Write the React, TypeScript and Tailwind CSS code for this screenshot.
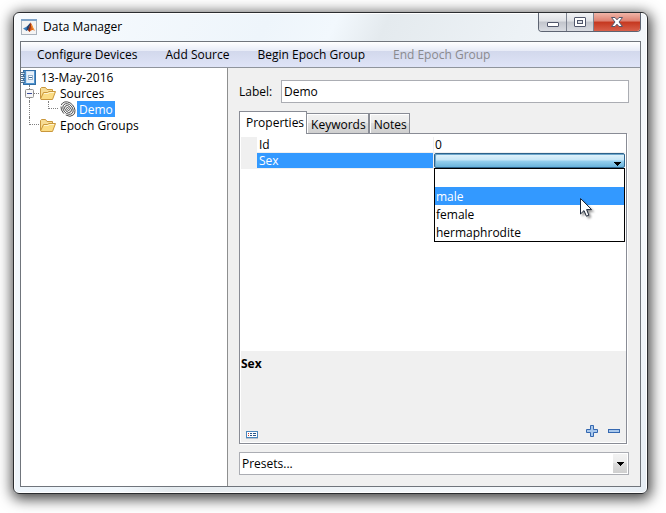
import { useState } from "react";

function MatlabIcon() {
  return (
    <svg width="16" height="16" viewBox="0 0 16 16" aria-hidden="true" className="shrink-0">
      <rect x="0.5" y="0.5" width="15" height="15" fill="#f4f4f4" stroke="#a9b2bc" />
      <rect x="0" y="0" width="16" height="2" fill="#7fa3c8" />
      <path d="M2 9.5 L6 7.5 L8 9 L5.5 12 Z" fill="#3a7fc0" />
      <path d="M6 7.5 L9.5 3.5 L8.5 9.5 L5.5 12 Z" fill="#27406e" />
      <path d="M9.5 3.5 C10.5 4 12 9 14 12 C12 10.5 11 10.5 8.5 13 L7 11 C8.5 9 9 6 9.5 3.5 Z" fill="#e0641c" />
      <path d="M9.5 3.5 C10.3 5 10 9 8.5 13 L7 11 C8.5 9 9 6 9.5 3.5 Z" fill="#8c2b16" />
      <path d="M10.5 6 C11.3 8 12 9.5 13 11" stroke="#f6a23a" fill="none" />
    </svg>
  );
}

function BookIcon() {
  return (
    <svg width="15" height="15" viewBox="0 0 15 15" aria-hidden="true" className="shrink-0">
      <rect x="2.5" y="0.5" width="12" height="14" fill="#4f93cf" stroke="#346fa6" />
      <rect x="5" y="1" width="8" height="12" fill="#cfe2f3" />
      <rect x="6" y="2" width="7" height="11" fill="#e8f1fa" />
      <rect x="7.5" y="5.5" width="4" height="4" fill="#fff" stroke="#9db4ca" />
      <path d="M8 7.5h3" stroke="#3d6d9c" />
      <path d="M0 2.5h4M0 4.5h4M0 6.5h4M0 8.5h4M0 10.5h4M0 12.5h4" stroke="#4c6f92" />
      <path d="M1 3.5h2M1 7.5h2M1 11.5h2" stroke="#d5e2ee" />
    </svg>
  );
}

function FolderIcon() {
  return (
    <svg width="16" height="13" viewBox="0 0 16 13" aria-hidden="true" className="shrink-0">
      <path d="M0.5 11.5 V1.5 L1.5 0.5 H5.5 L7 2.5 H12.5 V5" fill="#f7dc94" stroke="#c9973c" />
      <path d="M0.5 12 L3.5 5.5 H7.5 L9 4.5 H15.5 L12.5 12.5 H1 Z" fill="#fbdc84" stroke="#c9973c" />
      <path d="M4 6.5 H8 L9.5 5.5 H14" stroke="#fff5cf" fill="none" />
    </svg>
  );
}

function FingerprintIcon() {
  return (
    <svg width="16" height="16" viewBox="0 0 16 16" fill="none" stroke="#444" strokeWidth="0.9" aria-hidden="true" className="shrink-0">
      <g transform="rotate(-42 8 8)">
        <ellipse cx="8" cy="8" rx="1" ry="1.8" />
        <ellipse cx="8" cy="8" rx="2.7" ry="4" />
        <ellipse cx="8" cy="8" rx="4.4" ry="6" />
        <ellipse cx="8" cy="8" rx="6.1" ry="8" strokeDasharray="19 2 8 1.5" />
      </g>
    </svg>
  );
}

function Expander() {
  return (
    <svg width="9" height="9" viewBox="0 0 9 9" aria-hidden="true">
      <rect x="0.5" y="0.5" width="8" height="8" rx="1" fill="#f6f6f6" stroke="#919191" />
      <path d="M2 4.5h5" stroke="#3a4a9a" />
    </svg>
  );
}

function DownArrow() {
  return (
    <svg width="7" height="4" viewBox="0 0 7 4" aria-hidden="true" shapeRendering="crispEdges">
      <path d="M0 0h7v1H0zM1 1h5v1H1zM2 2h3v1H2zM3 3h1v1H3z" fill="#000" />
    </svg>
  );
}

function Cursor() {
  return (
    <svg width="16" height="22" viewBox="0 0 16 22" aria-hidden="true" className="drop-shadow-[2px_2px_1px_rgba(0,0,0,0.4)]">
      <path
        d="M0.5 0.5 V16 L4 12.6 L6.4 18.2 L8.9 17.2 L6.6 11.6 H11.6 Z"
        fill="#fff"
        stroke="#1c2638"
      />
    </svg>
  );
}

function TitleBar() {
  return (
    <header className="flex h-7 items-start pl-[7px] pr-[6px]">
      <div className="flex h-7 flex-1 items-center gap-[6px]">
        <MatlabIcon />
        <h1>Data Manager</h1>
      </div>
      <div className="flex h-[19px] overflow-hidden rounded-b-[4px] border border-t-0 border-[#5d6472]">
        <button aria-label="Minimize" className="flex w-7 items-center justify-center border-r border-[#7d8390] bg-[linear-gradient(#f1f2f4_0%,#dfe1e5_45%,#c2c5cc_50%,#d9dce2_100%)]">
          <svg width="12" height="5" viewBox="0 0 12 5" className="mt-[5px]">
            <rect x="0.5" y="0.5" width="11" height="4" rx="0.5" fill="#fff" stroke="#50566a" />
          </svg>
        </button>
        <button aria-label="Maximize" className="flex w-[27px] items-center justify-center border-r border-[#7d8390] bg-[linear-gradient(#f1f2f4_0%,#dfe1e5_45%,#c2c5cc_50%,#d9dce2_100%)]">
          <svg width="12" height="10" viewBox="0 0 12 10">
            <rect x="0.5" y="0.5" width="11" height="9" rx="0.5" fill="#fff" stroke="#50566a" />
            <rect x="3.5" y="3.5" width="5" height="3" fill="#dcdfe5" stroke="#50566a" />
          </svg>
        </button>
        <button aria-label="Close" className="flex w-[46px] items-center justify-center bg-[linear-gradient(#f0b5a8_0%,#dd8070_45%,#c5371f_50%,#d8604a_100%)]">
          <svg width="12" height="10" viewBox="0 0 12 10">
            <path
              d="M0.5 0.5 H4 L6 2.8 L8 0.5 H11.5 L8 5 L11.5 9.5 H8 L6 7.2 L4 9.5 H0.5 L4 5 Z"
              fill="#fff"
              stroke="#54566a"
            />
          </svg>
        </button>
      </div>
    </header>
  );
}

function Toolbar() {
  return (
    <nav className="flex h-[26px] shrink-0 items-center gap-7 border-b border-[#8f949c] bg-[linear-gradient(#fff_0px,#e7ebf7_9px,#d2d8ec_9px,#dfe4f7_25px)] pl-4 pt-px">
      <button>Configure Devices</button>
      <button>Add Source</button>
      <button>Begin Epoch Group</button>
      <button disabled className="text-[#8a8a8e]">
        End Epoch Group
      </button>
    </nav>
  );
}

function Tree() {
  return (
    <aside className="w-[207px] shrink-0 border-r border-[#8e8f8f] bg-white pt-px">
      <div className="flex h-4 items-center gap-[5px]">
        <BookIcon />
        <span className="pt-px">13-May-2016</span>
      </div>
      <ul>
        <li>
          <div className="flex h-4 items-center">
            <div className="ml-1 flex h-4 flex-col items-center">
              <span className="w-px flex-1 border-l border-dotted border-[#808080]" />
              <button aria-label="Collapse Sources">
                <Expander />
              </button>
              <span className="w-px flex-1 border-l border-dotted border-[#808080]" />
            </div>
            <span className="mr-px w-[5px] border-t border-dotted border-[#808080]" />
            <FolderIcon />
            <span className="ml-1 pt-px">Sources</span>
          </div>
          <ul>
            <li className="flex h-4">
              <span className="ml-2 mr-[18px] h-4 border-l border-dotted border-[#808080]" />
              <span className="mr-[2px] h-2 w-[10px] border-b border-l border-dotted border-[#808080]" />
              <FingerprintIcon />
              <span className="ml-px h-4 bg-[#3399ff] px-[2px] pt-px text-white">Demo</span>
            </li>
          </ul>
        </li>
        <li className="flex h-4 items-center">
          <span className="mb-2 ml-2 mr-px h-2 w-[10px] border-b border-l border-dotted border-[#808080]" />
          <FolderIcon />
          <span className="ml-1 pt-px">Epoch Groups</span>
        </li>
      </ul>
    </aside>
  );
}

function SexEditor() {
  const [sex, setSex] = useState("");
  const options = ["", "male", "female", "hermaphrodite"];
  return (
    <div className="relative h-[15px]">
      <select
        aria-label="Sex"
        value={sex}
        onChange={(e) => setSex(e.target.value)}
        className="block h-[15px] w-full appearance-none rounded-[2px] border border-[#2c628b] bg-[linear-gradient(#e3f3fb_0%,#c4e5f6_48%,#98d1ef_52%,#68b3db_100%)] px-1 shadow-[inset_1px_1px_0_#6fa8cc]"
      >
        {options.map((o) => (
          <option key={o}>{o}</option>
        ))}
      </select>
      <span className="pointer-events-none absolute bottom-[2px] right-1">
        <DownArrow />
      </span>
      <ul role="listbox" aria-label="Sex options" className="absolute inset-x-0 top-[15px] border border-black bg-white leading-4">
        {options.map((o) => (
          <li
            key={o}
            role="option"
            aria-selected={o === "male"}
            className="h-[18px] px-px pt-[2px] aria-selected:bg-[#3399ff] aria-selected:text-white"
          >
            {o}
          </li>
        ))}
      </ul>
      <span className="pointer-events-none absolute right-[29px] top-[45px]">
        <Cursor />
      </span>
    </div>
  );
}

function PropertyTable() {
  return (
    <table className="w-full table-fixed border-separate border-spacing-0 leading-[15px]">
      <colgroup>
        <col className="w-4" />
        <col className="w-[177px]" />
        <col />
      </colgroup>
      <tbody>
        <tr className="h-4">
          <td className="bg-[#f0f0f0] p-0" />
          <td className="border-b border-r border-[#f0f0f0] p-0 pl-[2px]">Id</td>
          <td className="border-b border-[#f0f0f0] p-0 pl-px">0</td>
        </tr>
        <tr className="h-4">
          <td className="bg-[#f0f0f0] p-0" />
          <td className="border-b border-r border-[#f0f0f0] bg-[#3399ff] bg-clip-padding p-0 pl-[2px] text-white">Sex</td>
          <td className="p-0 align-top">
            <SexEditor />
          </td>
        </tr>
      </tbody>
    </table>
  );
}

function PropertyPanel() {
  return (
    <section className="flex flex-1 flex-col">
      <div role="tablist" className="z-10 -mb-px flex items-end">
        <button role="tab" aria-selected="true" className="h-[23px] border border-b-0 border-[#898c95] bg-white pl-[6px] pr-[2px]">
          Properties
        </button>
        <button role="tab" aria-selected="false" className="-ml-px h-[21px] border border-[#898c95] bg-[linear-gradient(#f2f2f2_0%,#ebebeb_50%,#dddddd_50%,#cfcfcf_100%)] pl-1 pr-[2px] pt-[2px] shadow-[inset_1px_1px_0_#fff]">
          Keywords
        </button>
        <button role="tab" aria-selected="false" className="h-[21px] border border-[#898c95] bg-[linear-gradient(#f2f2f2_0%,#ebebeb_50%,#dddddd_50%,#cfcfcf_100%)] pl-1 pr-[2px] pt-[2px] shadow-[inset_1px_1px_0_#fff]">
          Notes
        </button>
      </div>
      <div className="mr-[2px] flex flex-1 flex-col border border-[#898c95] bg-white pb-px pl-px shadow-[1px_1px_0_#fff]">
        <div className="flex-1 pr-px pt-[3px]">
          <PropertyTable />
        </div>
        <div className="flex h-[91px] flex-col justify-between bg-[#f0f0f0] pt-[5px]">
          <p className="font-bold">Sex</p>
          <div className="flex items-end gap-[10px] pb-[3px] pl-[5px] pr-[6px]">
            <button aria-label="Show description" className="mr-auto">
              <svg width="12" height="8" viewBox="0 0 12 8">
                <rect x="0.5" y="0.5" width="11" height="6" fill="#fff" stroke="#4a86bd" />
                <path d="M0 7.5h12" stroke="#b9c4cf" />
                <path d="M2 2.5h1M2 4.5h1" stroke="#c0392b" />
                <path d="M4 2.5h2M7 2.5h3M4 4.5h2M7 4.5h3" stroke="#27558a" />
              </svg>
            </button>
            <button aria-label="Add property" className="pb-[2px]">
              <svg width="12" height="12" viewBox="0 0 12 12">
                <path d="M4.5 0.5h3v4h4v3h-4v4h-3v-4h-4v-3h4z" fill="#a9c8ec" stroke="#3568b0" />
              </svg>
            </button>
            <button aria-label="Remove property" className="pb-[6px]">
              <svg width="12" height="4" viewBox="0 0 12 4">
                <rect x="0.5" y="0.5" width="11" height="3" fill="#a9c8ec" stroke="#3568b0" />
              </svg>
            </button>
          </div>
        </div>
      </div>
    </section>
  );
}

function Presets() {
  return (
    <div className="relative mt-2">
      <select aria-label="Presets" className="block h-[23px] w-full appearance-none border border-[#abadb3] bg-white px-[2px]">
        <option>Presets...</option>
      </select>
      <span className="pointer-events-none absolute bottom-[2px] right-[2px] top-[2px] flex w-[14px] items-center justify-center bg-[linear-gradient(#f2f2f2_0%,#ebebeb_50%,#dddddd_50%,#cfcfcf_100%)]">
        <DownArrow />
      </span>
    </div>
  );
}

export default function App() {
  return (
    <div className="flex h-screen flex-col overflow-hidden bg-white pb-[19px] pl-[13px] pr-[18px] pt-3 font-['Open_Sans','Noto_Sans',sans-serif] text-xs leading-4 text-black">
      <main className="flex flex-1 flex-col rounded-[6px] border border-[#2b2d30] bg-[linear-gradient(115deg,#f8fbfe_0%,#eef5fb_30%,#f2f8fd_38%,#e4eaee_44%,#edf2f6_60%,#f7fafd_85%,#e6edf4_100%)] shadow-[1px_3px_14px_2px_rgba(0,0,0,0.75),inset_0_0_0_1px_#fff]">
        <TitleBar />
        <div className="mx-[6px] mb-[6px] flex flex-1 flex-col border border-[#70757c] bg-[#f0f0f0]">
          <Toolbar />
          <div className="flex flex-1">
            <Tree />
            <div className="flex flex-1 flex-col pb-[11px] pl-[11px] pr-[11px] pt-3">
              <div className="mb-2 flex items-center">
                <label htmlFor="label" className="w-[42px]">
                  Label:
                </label>
                <input id="label" defaultValue="Demo" className="h-[23px] min-w-0 flex-1 border border-[#abadb3] bg-white px-[2px]" />
              </div>
              <PropertyPanel />
              <Presets />
            </div>
          </div>
        </div>
      </main>
    </div>
  );
}
